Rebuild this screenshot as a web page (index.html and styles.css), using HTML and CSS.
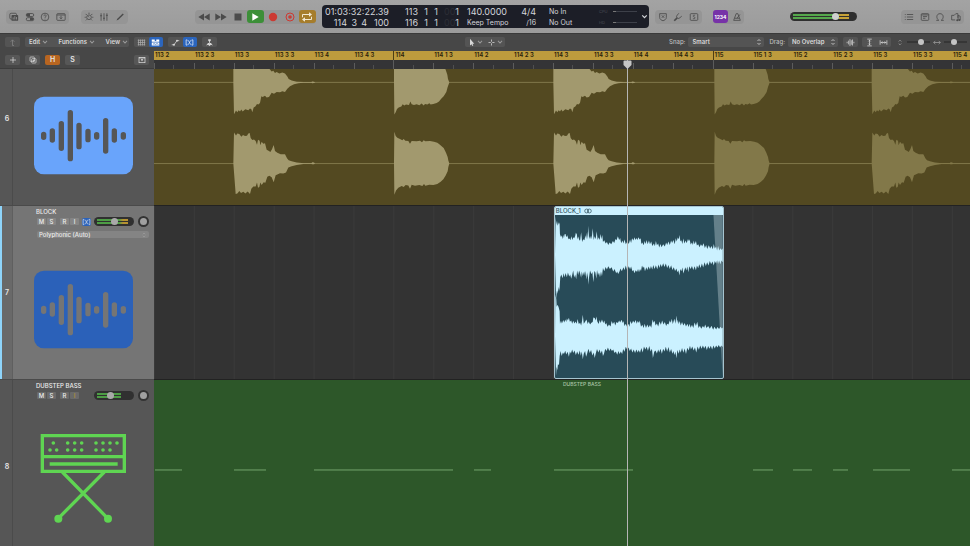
FILE: index.html
```
<!DOCTYPE html>
<html lang="en">
<head>
    <meta charset="UTF-8">
    <meta name="viewport" content="width=device-width, initial-scale=1.0">
    <title>Tracks</title>
    <link rel="stylesheet" href="styles.css">
</head>
<body>
    <!-- shared shapes -->
    <svg class="defs" width="0" height="0" aria-hidden="true">
        <symbol id="chevron" viewBox="0 0 6 6"><path d="M1.5 2.2 3 3.8 4.5 2.2" fill="none" stroke="currentColor" stroke-width=".8"/></symbol>
        <symbol id="updown" viewBox="0 0 6 8"><path d="M1.5 3 3 1.5 4.5 3M1.5 5 3 6.5 4.5 5" fill="none" stroke="currentColor" stroke-width=".8"/></symbol>
        <symbol id="flex" viewBox="0 0 12 10"><path d="M3 1.500H1.500V8.500H3M9 1.500h1.500V8.500H9M3.500 7.500C5 8.500 5 6 6 5S7 1.500 8.500 2.500M3.500 2.500C5 1.500 5 4 6 5S7 8.500 8.500 7.500" fill="none" stroke="currentColor" stroke-width=".9"/></symbol>
        <symbol id="wave-icon" viewBox="101 165 297 294">
            <rect x="101" y="197" width="297" height="233" rx="30" fill="currentColor"/>
            <path class="bars" d="M130 310v9M156 300v27M183 278v74M210 245v138M236 283v64M263 301v25M289 311v7M316 269v91M342 300v27M369 311v7"/>
        </symbol>
        <g id="kick">
            <path d="M250 68V-30H300L320 -5 335 5 350 20 358 27 365 35 370 33 375 40 380 37 388 41 397 38 405 41 412 50 416 58 425 62 440 66 462 67 484 67 487 65 492 66 496 68 492 70 487 71 484 69 460 69 445 71 432 74 420 80 412 87 405 97 397 95 390 98 380 97 372 102 365 99 357 112 350 114 345 108 338 112 334 110 330 130 325 135 321 133 316 141 311 144 307 158 304 149 300 147 295 152 286 149 278 156 274 150 270 156 266 152 262 158 258 153 252 164Z"/>
            <path d="M250 313 252 219 258 228 262 222 268 224 274 232 279 227 285 230 291 229 295 222 299 221 302 236 307 242 312 240 317 245 321 256 324 241 329 244 331 258 335 247 340 253 345 252 350 271 357 275 361 278 366 270 371 257 375 275 382 280 392 285 405 285 411 297 416 303 425 306 440 310 462 312 484 312 487 309 492 310 495 313 492 315 487 315 484 314 460 314 440 317 425 321 415 325 408 340 400 343 390 342 382 346 377 348 371 369 365 354 358 350 352 353 346 371 341 369 335 378 331 370 328 384 324 386 321 370 317 382 310 382 304 389 300 405 293 397 286 403 280 398 273 402 268 396 262 403 257 405Z"/>
        </g>
        <g id="clap">
            <path d="M732 68V-25L742 5 880 15 887 30 892 45 894 58 898 68 893 82 889 97 881 110 873 118 867 126 860 130 850 133 842 135 838 131 832 135 825 133 821 138 815 132 808 137 800 134 792 136 785 134 781 126 777 136 768 135 763 138 758 134 754 141 746 144 741 148 737 158 733 165Z"/>
            <path d="M732 313 733 217 737 230 742 235 750 239 757 243 761 239 766 244 775 245 780 253 785 245 800 246 810 244 816 249 821 243 826 246 840 245 852 247 862 250 868 255 874 260 881 266 888 280 893 293 895 304 898 313 895 323 893 336 887 349 880 360 872 368 862 375 850 378 838 377 826 380 822 375 817 381 808 378 795 380 785 377 780 389 775 379 767 378 761 384 755 381 745 386 738 394 733 407Z"/>
        </g>
    </svg>

    <header class="control-bar">
        <div class="group">
            <button aria-label="Library"><svg viewBox="0 0 12 12"><rect x="1" y="1.500" width="8" height="7" rx="1.500"/><rect class="solid" x="3" y="3.500" width="8" height="7" rx="1"/><path class="cut" d="M5 9V6.500M7 9V5M9 9V6"/></svg></button>
            <button aria-label="Inspector"><svg viewBox="0 0 12 12"><rect x="1.500" y="1.800" width="9" height="3.600" rx="1.800"/><rect x="1.500" y="6.800" width="9" height="3.600" rx="1.800"/><path class="solid" d="M2 2h4v3H2zM6 7h4v3H6z"/></svg></button>
            <button aria-label="Quick Help"><svg viewBox="0 0 12 12"><circle cx="6" cy="6" r="4.600"/><path d="M4.600 5C4.600 3 7.500 3 7.400 4.800 7.300 5.700 6 5.800 6 7M6 8v1"/></svg></button>
            <button aria-label="Toolbar"><svg viewBox="0 0 12 12"><rect x="1" y="2" width="10" height="8" rx="1"/><path d="M1 3.600h10M6 4.500v3.500M4.500 6.600 6 8.200 7.500 6.600"/></svg></button>
        </div>
        <div class="group editors">
            <button aria-label="Smart Controls"><svg viewBox="0 0 12 12"><circle cx="6" cy="6.300" r="2.800"/><path d="M6 6.300 4.800 5M2 2.300l1.300 1.300M10 2.300 8.700 3.600M.8 6.300h1.400M9.800 6.300h1.400M6 .8v1.600M2.300 10l1.200-1.200M9.700 10 8.500 8.800"/></svg></button>
            <button aria-label="Mixer"><svg viewBox="0 0 12 12"><path d="M2.500 1.500v9M6 1.500v9M9.500 1.500v9M1.300 4.500h2.400M4.800 7.500h2.400M8.300 4h2.400"/></svg></button>
            <button aria-label="Editors"><svg viewBox="0 0 12 12"><path class="solid" d="M1.800 10.200 2.800 8 9.300 1.800 10.500 3 4 9.300z"/></svg></button>
        </div>
        <div class="group transport">
            <button aria-label="Rewind"><svg viewBox="0 0 12 12"><path class="solid" d="M6 2.500v7L.3 6zM11.700 2.500v7L6 6z"/></svg></button>
            <button aria-label="Forward"><svg viewBox="0 0 12 12"><path class="solid" d="M.3 2.500v7L6 6zM6 2.500v7L11.700 6z"/></svg></button>
            <button aria-label="Stop"><svg viewBox="0 0 12 12"><path class="solid" d="M2.500 2.500h7v7h-7z"/></svg></button>
            <button class="play" aria-label="Play"><svg viewBox="0 0 12 12"><path class="solid" d="M3.300 2.200v7.600L9.700 6z"/></svg></button>
            <button class="record" aria-label="Record"><svg viewBox="0 0 12 12"><circle class="solid" cx="6" cy="6" r="4.200"/></svg></button>
            <button class="record" aria-label="Capture"><svg viewBox="0 0 12 12"><circle cx="6" cy="6" r="4"/><circle class="solid" cx="6" cy="6" r="1.800"/></svg></button>
            <button class="cycle" aria-label="Cycle"><svg viewBox="0 0 12 12"><path d="M1.500 6.300V3.500h7M10.500 5.700v2.800h-7"/><path class="solid" d="M8 1.300v4.400l3-2.200zM4 6.300v4.400L1 8.500z"/></svg></button>
        </div>
        <div class="lcd">
            <div class="position">
                <div class="time">01:03:32:22.39</div>
                <div class="beats"><span>114</span><span>3</span><span>4</span><span>100</span></div>
            </div>
            <div class="locators">
                <span>113</span><span>1</span><span>1</span><span><i>00</i>1</span>
                <span>116</span><span>1</span><span>1</span><span><i>00</i>1</span>
            </div>
            <div class="tempo"><div>140.0000</div><div class="small">Keep Tempo</div></div>
            <div class="signature"><div>4/4</div><div class="small">/16</div></div>
            <div class="midi small"><div>No In</div><div>No Out</div></div>
            <div class="load"><div>CPU<b></b></div><div>HD<b></b></div></div>
            <button class="lcd-menu" aria-label="Display mode"><svg viewBox="0 0 6 6"><use href="#chevron"/></svg></button>
        </div>
        <div class="group modes">
            <button aria-label="Replace"><svg viewBox="0 0 12 12"><path d="M2 2h8v4.500C10 9 7.500 10 6 10.500 4.500 10 2 9 2 6.500zM4.500 4l3 3M7.500 4l-3 3"/></svg></button>
            <button aria-label="Tuner"><svg viewBox="0 0 12 12"><path class="thick" d="M1.500 10.500 5 7"/><path d="M5 7C3.500 5.500 4 5 7 1.500M5 7C6.500 8.500 7 8 10.500 5"/></svg></button>
            <button aria-label="Solo"><svg viewBox="0 0 12 12"><rect x="1.500" y="2" width="9" height="8" rx="1"/><path d="M7.300 4.200C6 3.500 4.700 4 4.900 5c.2 1 2.200.8 2.300 1.900C7.300 8.200 5.500 8.400 4.600 7.600"/></svg></button>
        </div>
        <div class="group count">
            <button class="count-in">1234</button>
            <button aria-label="Metronome"><svg viewBox="0 0 12 12"><path d="M5 2h2l3 8H2zM3.200 7.500h5.600M6 7.500 9.500 3"/></svg></button>
        </div>
        <input class="master" type="range" min="0" max="100" value="70" aria-label="Master volume">
        <div class="group browsers">
            <button aria-label="List Editors"><svg viewBox="0 0 12 12"><path d="M1 3h1M1 6h1M1 9h1M3.500 3H11M3.500 6H11M3.500 9H11"/></svg></button>
            <button aria-label="Note Pads"><svg viewBox="0 0 12 12"><rect x="1.500" y="2" width="9" height="8" rx="1"/><path d="M1.500 3.500h9M3.500 5.500h5M3.500 7.500h3"/></svg></button>
            <button aria-label="Loop Browser"><svg viewBox="0 0 12 12"><path d="M1.500 10h3C1 7.500 1.500 2 6 2s5 5.500 1.500 8h3"/></svg></button>
            <button aria-label="Media Browser"><svg viewBox="0 0 12 12"><path d="M5 9.500H.8V4h3l2-2h2.500v5M8.500 10V4l2.500 1v5"/><circle class="solid" cx="7.500" cy="10" r="1.200"/><circle class="solid" cx="10" cy="9.500" r="1.200"/></svg></button>
        </div>
    </header>

    <nav class="toolbar">
        <button class="chip dim" aria-label="Up"><svg viewBox="0 0 12 12"><path d="M8 10H6V2.500M3.500 5 6 2.500 8.500 5"/></svg></button>
        <div class="menus">
            <button>Edit<svg viewBox="0 0 6 6"><use href="#chevron"/></svg></button>
            <button>Functions<svg viewBox="0 0 6 6"><use href="#chevron"/></svg></button>
            <button>View<svg viewBox="0 0 6 6"><use href="#chevron"/></svg></button>
        </div>
        <div class="pair">
            <button class="muted" aria-label="Grid"><svg viewBox="0 0 12 12"><path d="M1 3h10M1 6h10M1 9h10M2 2v8M4.700 2v8M7.400 2v8M10 2v8"/></svg></button>
            <button class="on" aria-label="Regions"><svg viewBox="0 0 12 12"><path class="solid" d="M1 2h4v2h2V2h4v3H1zM1 6h10v4H1z"/><path class="blue" d="M2.500 8.500 4 7.500l2 1 2-1 2 1"/></svg></button>
        </div>
        <div class="pair">
            <button aria-label="Automation"><svg viewBox="0 0 12 12"><path d="M1 9h3L8 3.500h3"/><circle class="solid" cx="4" cy="9" r="1.300"/><circle class="solid" cx="8" cy="3.500" r="1.300"/></svg></button>
            <button class="on" aria-label="Flex"><svg viewBox="0 0 12 10"><use href="#flex"/></svg></button>
        </div>
        <button class="chip" aria-label="Catch playhead"><svg viewBox="0 0 12 12"><path class="solid" d="M4.300 1.500h3.400v2L6 5 4.300 3.500zM1.500 10 4 6.500h1.500v1.500h1V6.500H8L10.500 10 8 9 6 10.500 4 9z"/><path d="M6 4v4"/></svg></button>
        <div class="tools">
            <button aria-label="Pointer tool"><svg viewBox="0 0 12 12"><path class="solid" d="M4 1v9l2-1.800 1.200 2.500 1.200-.6L7.300 7.700h2.400z"/></svg><svg class="arrow" viewBox="0 0 6 6"><use href="#chevron"/></svg></button>
            <button aria-label="Marquee tool"><svg viewBox="0 0 12 12"><path d="M6 2v3M6 7v3M2 6h3M7 6h3"/></svg><svg class="arrow" viewBox="0 0 6 6"><use href="#chevron"/></svg></button>
        </div>
        <label for="snap">Snap:</label>
        <div class="picker snap">
            <select id="snap"><option>Smart</option></select>
            <svg viewBox="0 0 6 8"><use href="#updown"/></svg>
        </div>
        <label for="drag">Drag:</label>
        <div class="picker drag">
            <select id="drag"><option>No Overlap</option></select>
            <svg viewBox="0 0 6 8"><use href="#updown"/></svg>
        </div>
        <button class="chip" aria-label="Waveform zoom"><svg viewBox="0 0 12 12"><path d="M1.500 5v2M3.500 3.500v5M5.300 1.500v9M7 3v6M8.700 2v8M10.500 5v2"/></svg></button>
        <div class="pair">
            <button aria-label="Fit height"><svg viewBox="0 0 12 12"><path d="M3 1.500h6M3 10.500h6M6 2.500v7M4.500 4.500 6 3l1.500 1.500M4.500 7.500 6 9l1.500-1.500"/></svg></button>
            <button aria-label="Fit width"><svg viewBox="0 0 12 12"><path d="M1.500 3v6M10.500 3v6M2.500 6h7M4.500 4.500 3 6l1.500 1.500M7.500 4.500 9 6 7.500 7.500"/></svg></button>
        </div>
        <div class="zoom">
            <svg viewBox="0 0 12 12"><path d="M4 4.500 6 2.500l2 2M4 7.500l2 2 2-2"/></svg>
            <input type="range" value="65" aria-label="Vertical zoom">
            <svg viewBox="0 0 12 12"><path d="M1 6h10M3.500 3.500 1 6l2.500 2.500M8.500 3.500 11 6 8.500 8.500"/></svg>
            <input type="range" value="40" aria-label="Horizontal zoom">
        </div>
    </nav>

    <main class="workspace">
        <div class="ruler-row">
            <div class="track-tools">
                <button aria-label="New track"><svg viewBox="0 0 12 12"><path d="M6 1.500v9M1.500 6h9"/></svg></button>
                <button aria-label="Duplicate track"><svg viewBox="0 0 12 12"><rect x="1.500" y="1.500" width="6.500" height="6.500" rx="1"/><rect x="4" y="4" width="6.500" height="6.500" rx="1"/><path d="M7.200 5.500v3.500M5.500 7.200h3.500"/></svg></button>
                <button class="hide">H</button>
                <button>S</button>
                <button class="last" aria-label="Track header settings"><svg viewBox="0 0 12 12"><rect x="1.500" y="2" width="9" height="8"/><path d="M1.500 3h9"/><path class="solid" d="M4 5h4L6 8z"/></svg></button>
            </div>
            <ol class="ruler">
                <li>113 2</li><li>113 2 3</li><li>113 3</li><li>113 3 3</li><li>113 4</li><li>113 4 3</li>
                <li class="bar">114</li><li>114 1 3</li><li>114 2</li><li>114 2 3</li><li>114 3</li><li>114 3 3</li><li>114 4</li><li>114 4 3</li>
                <li class="bar">115</li><li>115 1 3</li><li>115 2</li><li>115 2 3</li><li>115 3</li><li>115 3 3</li><li>115 4</li>
            </ol>
        </div>

        <div class="tracks">
            <section class="track">
                <div class="head">
                    <div class="number">6</div>
                    <div class="info">
                        <div class="strip"></div>
                        <svg class="instrument audio"><use href="#wave-icon"/></svg>
                    </div>
                </div>
                <div class="lane gold">
                    <svg class="content" viewBox="12 -84 2448 522" preserveAspectRatio="none">
                        <path class="zero" d="M12 68H2460M12 313H2460"/>
                        <use class="loud" href="#kick"/>
                        <use class="loud" href="#clap"/>
                        <use class="loud" href="#kick" x="960"/>
                        <use class="soft" href="#clap" x="961"/>
                        <use class="soft" href="#kick" x="1915"/>
                    </svg>
                </div>
            </section>

            <section class="track selected">
                <div class="head">
                    <div class="number">7</div>
                    <div class="info">
                        <div class="strip">
                            <div class="name">BLOCK</div>
                            <div class="controls">
                                <div class="switches"><button>M</button><button>S</button></div>
                                <div class="switches"><button>R</button><button>I</button></div>
                                <button class="flex-on" aria-label="Flex"><svg viewBox="0 0 12 10"><use href="#flex"/></svg></button>
                                <input class="volume" type="range" value="50" aria-label="Volume">
                                <button class="pan" aria-label="Pan"></button>
                            </div>
                            <div class="picker mode">
                                <select aria-label="Flex mode"><option>Polyphonic (Auto)</option></select>
                                <svg viewBox="0 0 6 8"><use href="#updown"/></svg>
                            </div>
                        </div>
                        <svg class="instrument audio"><use href="#wave-icon"/></svg>
                    </div>
                </div>
                <div class="lane empty">
                    <article class="region">
                        <h2>BLOCK_1 <svg viewBox="0 0 9 6"><circle cx="3" cy="3" r="2.200"/><circle cx="6" cy="3" r="2.200"/></svg></h2>
                        <svg class="audio-wave" viewBox="43 46 507 490" preserveAspectRatio="none">
                            <path class="fade" d="M522 46H550V536Z"/>
                            <path class="wave" d="M43 167 45 50 47 75 49 63 51 78 53 73 55 68 57 74 58 104 61 112 64 108 66 119 68 105 70 116 72 104 75 103 77 113 80 107 84 119 87 117 90 122 92 110 96 121 98 113 101 116 104 109 106 99 109 104 111 120 113 111 117 123 119 122 122 98 125 127 128 119 132 122 135 107 137 118 140 96 142 120 144 78 146 118 149 109 152 119 155 107 157 86 160 121 163 110 166 119 169 95 172 121 175 113 178 121 181 103 184 119 186 105 188 127 192 122 196 132 200 127 204 136 208 129 213 134 218 124 222 130 226 118 229 122 233 110 237 121 240 115 243 131 247 123 250 132 253 120 257 134 262 126 266 133 270 120 273 130 276 116 280 123 283 113 286 121 289 115 292 121 295 113 299 120 302 116 304 133 307 129 311 137 314 124 317 133 320 121 323 134 327 123 330 134 334 126 337 139 342 132 345 140 348 124 351 137 355 132 358 144 362 133 365 143 370 134 375 141 379 129 382 136 386 126 390 136 394 123 397 130 401 121 405 134 408 116 411 126 414 114 417 119 419 106 422 125 425 122 428 133 431 117 434 132 438 123 441 131 445 118 448 125 450 119 453 135 457 129 460 136 462 123 465 134 469 124 472 138 476 134 480 143 484 134 488 140 492 131 496 145 500 136 503 148 508 137 512 147 516 139 520 149 523 133 526 147 530 141 533 153 536 139 540 153 543 146 547 151 550 146V188L546 183 543 194 539 183 536 193 533 182 530 192 526 184 523 198 519 186 515 194 511 184 507 198 503 188 499 199 495 188 491 204 487 192 483 205 479 194 476 206 472 198 469 212 465 200 461 211 457 199 453 208 449 200 446 218 443 201 440 213 437 203 434 212 431 222 428 204 425 215 422 208 419 228 416 212 413 218 410 207 406 214 402 203 398 211 394 197 390 208 386 196 382 205 378 192 374 202 370 191 366 202 362 193 359 205 356 195 352 209 348 197 344 208 340 196 337 210 333 199 330 210 326 201 322 211 319 203 315 215 312 201 309 205 306 198 303 214 300 208 297 218 294 208 291 217 287 212 283 221 280 211 277 215 273 201 270 209 266 200 261 212 257 198 253 212 250 203 245 215 241 207 238 216 234 223 231 216 228 221 223 208 219 216 214 203 209 208 204 200 200 210 196 202 192 215 188 205 185 230 182 216 179 233 176 219 173 227 170 211 168 238 165 219 162 214 159 248 156 217 153 224 149 213 146 233 144 256 142 218 139 240 136 214 134 230 131 216 127 229 124 216 122 235 119 222 116 213 113 226 110 213 107 239 104 225 101 234 98 213 95 226 92 238 89 225 86 231 82 219 79 233 75 220 72 233 69 221 66 236 62 225 59 233 57 265 55 275 53 262 51 283 49 273 46 300Z"/>
                            <path class="wave" d="M43 410 44 285 47 300 48 322 51 316 54 323 57 335 58 373 61 364 64 372 68 362 71 369 74 360 77 368 79 357 82 363 85 355 88 367 92 363 95 373 98 364 102 372 105 366 109 373 111 359 115 374 119 370 122 378 125 363 127 346 130 373 134 367 138 360 142 374 145 366 149 375 153 370 157 368 159 354 163 356 166 363 168 351 171 366 175 374 178 362 181 371 185 360 189 371 192 363 195 375 198 371 202 382 206 375 211 381 214 365 218 374 222 367 225 378 229 368 233 371 237 363 240 369 244 361 248 371 250 365 253 380 257 373 261 383 265 373 268 382 271 365 275 374 279 364 283 370 287 362 290 373 293 365 297 371 299 363 303 382 307 376 311 386 314 373 318 386 322 375 326 384 330 377 334 385 338 360 341 370 344 364 347 378 351 372 355 381 359 366 363 376 367 363 371 375 375 368 379 380 382 373 386 375 390 363 393 370 396 358 399 374 402 364 404 358 407 373 410 348 412 370 414 361 417 374 420 365 423 378 427 368 431 378 435 371 439 381 443 373 447 383 450 373 453 385 457 376 461 386 465 369 469 380 473 367 477 386 481 379 485 388 490 380 494 385 497 375 501 386 506 380 511 388 516 379 521 391 525 382 530 390 534 383 539 389 543 382 547 387 550 384V443L546 438 542 444 538 437 534 444 530 438 526 447 522 438 518 450 514 439 510 448 506 440 502 452 498 439 494 447 490 438 486 448 482 438 478 451 474 441 470 459 466 444 462 453 458 441 454 450 451 439 447 453 443 445 439 464 435 447 431 460 427 446 423 460 420 450 417 463 413 452 410 477 407 457 404 467 401 455 398 463 394 449 390 459 386 443 382 456 378 442 374 456 370 448 366 463 362 448 358 459 355 450 351 462 347 453 343 457 339 476 336 448 332 456 328 440 324 454 320 442 316 450 312 441 308 459 304 446 300 460 296 452 293 459 289 450 285 461 281 450 277 459 273 447 269 455 265 444 261 450 257 442 253 457 249 449 246 464 242 456 238 464 235 455 231 466 227 456 223 461 219 450 215 455 211 447 207 455 203 444 199 455 195 448 191 463 188 470 185 453 181 462 178 450 174 459 170 449 166 463 163 476 160 459 156 468 152 452 148 461 144 448 140 463 137 472 134 455 130 463 127 480 124 456 121 469 118 453 114 466 110 456 106 467 102 453 98 461 95 450 91 462 88 456 85 472 81 457 77 465 74 454 70 464 67 459 63 470 60 455 57 470 55 498 52 494 50 513 48 502 46 530Z"/>
                        </svg>
                    </article>
                </div>
            </section>

            <section class="track">
                <div class="head">
                    <div class="number">8</div>
                    <div class="info">
                        <div class="strip">
                            <div class="name">DUBSTEP BASS</div>
                            <div class="controls">
                                <div class="switches"><button>M</button><button>S</button></div>
                                <div class="switches"><button>R</button><button class="input">I</button></div>
                                <input class="volume quiet" type="range" value="40" aria-label="Volume">
                                <button class="pan" aria-label="Pan"></button>
                            </div>
                        </div>
                        <svg class="instrument synth" viewBox="101 177 297 294">
                            <path class="frame" d="M126 182H372V289H126ZM126 245H372M148 267H352" />
                            <path class="legs" d="M186 291 322 430M312 291 174 430"/>
                            <circle cx="174" cy="431" r="12"/><circle cx="323" cy="431" r="12"/>
                            <path class="dots" d="M159 204h0M202 204h0M223 204h0M244 204h0M287 204h0M308 204h0M329 204h0M350 204h0M149 225h0M169 225h0M202 225h0M223 225h0M244 225h0M287 225h0M308 225h0M329 225h0"/>
                        </svg>
                    </div>
                </div>
                <div class="lane green">
                    <svg class="content" viewBox="0 0 816 174" preserveAspectRatio="none">
                        <path class="notes" d="M1 90.500H28M80 90.500H112M160 90.500H299M320 90.500H337M400 90.500H479M599 90.500H619M639 90.500H658M679 90.500H694M719 90.500H756M798 90.500H816"/>
                    </svg>
                    <h2 class="region-name">DUBSTEP BASS</h2>
                </div>
            </section>
        </div>

        <div class="playhead"><svg viewBox="0 0 9 9"><path d="M.5 1.500Q.5.500 1.500.500h6q1 0 1 1V5L4.500 9 .5 5z"/></svg></div>
    </main>
</body>
</html>
```

FILE: styles.css
```
* {
    box-sizing: border-box;
}

body {
    margin: 0;
    height: 100vh;
    display: flex;
    flex-direction: column;
    overflow: hidden;
    background: #343434;
    color: #e4e4e4;
    font-family: Inter, "Liberation Sans", sans-serif;
    font-size: 6px;
    line-height: 8px;
}

button,
select,
input {
    margin: 0;
    padding: 0;
    border: 0;
    background: none;
    color: inherit;
    font: inherit;
    appearance: none;
}

button {
    display: flex;
    align-items: center;
    justify-content: center;
}

svg {
    display: block;
    fill: none;
    stroke: currentColor;
}

.defs {
    position: absolute;
}

.solid {
    fill: currentColor;
    stroke: none;
}

.thick {
    stroke-width: 2;
}

/* control bar */
.control-bar {
    display: flex;
    align-items: center;
    height: 33px;
    flex: none;
    padding: 0 6px;
    background: linear-gradient(#a3a3a3, #9b9b9b);
    color: #4b4b4b;
}

.group {
    display: flex;
    align-items: center;
    justify-content: space-around;
    width: 63px;
    height: 14px;
    border-radius: 4px;
    background: #959595;
}

.group svg {
    width: 10px;
    height: 10px;
}

.group .cut {
    stroke: #959595;
}

.editors {
    width: 47px;
    margin-left: 12px;
}

.transport {
    justify-content: space-between;
    width: 121px;
    margin-left: 67px;
}

.transport button {
    width: 17px;
    height: 13px;
    border-radius: 3px;
}

.transport svg {
    width: 12px;
    height: 12px;
}

.transport .play {
    background: #3c8f38;
    color: #fff;
}

.transport .record {
    color: #cb3a33;
}

.transport .cycle {
    background: #a67d2b;
    color: #f2e9d2;
}

.lcd {
    display: flex;
    align-items: center;
    width: 327px;
    height: 23px;
    margin-left: 6px;
    padding-left: 3px;
    border-radius: 4px;
    background: #1c1e27;
    color: #d3d5da;
    font-size: 9px;
    line-height: 11px;
}

.position {
    width: 72px;
}

.beats {
    display: grid;
    grid-template-columns: 22px 10px 10px 22px;
    text-align: right;
}

.locators {
    display: grid;
    grid-template-columns: 21px 10px 10px 21px;
    width: 70px;
    text-align: right;
}

.locators i {
    color: #2c2e36;
    font-style: normal;
}

.tempo {
    width: 46px;
}

.lcd .small {
    font-size: 7px;
}

.signature {
    width: 23px;
    text-align: right;
}

.midi {
    width: 50px;
    margin-left: 13px;
}

.load {
    width: 38px;
    color: #484b54;
    font-size: 4px;
}

.load div {
    display: flex;
    align-items: center;
    justify-content: space-between;
}

.load b {
    width: 24px;
    height: 1px;
    background: linear-gradient(90deg, #777 3px, #3d4049 3px);
}

.lcd-menu {
    margin-left: auto;
}

.lcd-menu svg {
    width: 9px;
    height: 9px;
}

.modes {
    width: 47px;
    margin-left: 6px;
}

.count {
    width: 31px;
    margin-left: 11px;
    justify-content: space-between;
    padding-right: 2px;
}

.count-in {
    width: 15px;
    height: 13px;
    border-radius: 3px;
    background: #7732a8;
    color: #fff;
    font-size: 5px;
    font-weight: 700;
}

/* level meters double as faders */
.master {
    width: 67px;
    height: 9px;
    margin-left: 46px;
    border-radius: 5px;
    background:
        linear-gradient(#2f2f2f, #2f2f2f) 3px 4px / 56px 1px no-repeat,
        linear-gradient(90deg, #55a84c 46px, #c5a137 46px) 3px 2px / 56px 5px no-repeat,
        #2f2f2f;
}

.master::-webkit-slider-thumb,
.volume::-webkit-slider-thumb {
    appearance: none;
    width: 7px;
    height: 7px;
    border-radius: 50%;
    background: #cfcfcf;
}

.browsers {
    width: 63px;
    margin-left: auto;
}

/* tracks toolbar */
.toolbar {
    display: flex;
    align-items: center;
    flex: none;
    height: 18px;
    padding: 0 3px 1px 5px;
    border-top: 1px solid #3a3a3a;
    background: #474747;
    color: #d8d8d8;
    font-weight: 600;
}

.toolbar svg {
    width: 9px;
    height: 9px;
}

.chip,
.menus,
.pair,
.tools,
.picker {
    height: 10px;
    border-radius: 2px;
    background: #545454;
}

.chip {
    width: 15px;
}

.dim {
    color: #858585;
}

.muted {
    color: #aaa;
}

.menus {
    display: flex;
    justify-content: space-between;
    width: 104px;
    margin-left: 5px;
    margin-right: 5px;
    padding-left: 4px;
}

.menus button {
    gap: 1px;
}

.menus svg,
.tools .arrow {
    width: 8px;
    height: 8px;
    color: #999;
}

.pair {
    display: flex;
    width: 29px;
    margin-right: 5px;
}

.pair button {
    flex: 1;
    border-radius: 2px;
}

.pair .on {
    background: #2b65bd;
    color: #fff;
}

.blue {
    stroke: #2b65bd;
}

.tools {
    display: flex;
    justify-content: space-around;
    width: 40px;
    margin-left: 248px;
    margin-right: auto;
}

.toolbar label {
    color: #bdbdbd;
    font-weight: 500;
}

.picker {
    display: flex;
    align-items: center;
    margin: 0 5px 0 3px;
}

.picker select {
    flex: 1;
    min-width: 0;
    padding-left: 4px;
}

.picker svg {
    width: 6px;
    height: 8px;
    margin-right: 2px;
    pointer-events: none;
}

.snap {
    width: 76px;
}

.drag {
    width: 50px;
}

.drag + .chip {
    margin-right: 4px;
}

.zoom {
    display: flex;
    align-items: center;
    gap: 3px;
    width: 71px;
}

.zoom svg {
    width: 8px;
    flex: none;
    color: #aaa;
}

.zoom input {
    flex: 1;
    min-width: 0;
    height: 6px;
    background: linear-gradient(#363636, #363636) center / 100% 2px no-repeat;
}

.zoom input::-webkit-slider-thumb {
    appearance: none;
    width: 6px;
    height: 6px;
    border-radius: 50%;
    background: #c4c4c4;
}

/* ruler */
.workspace {
    position: relative;
    flex: 1;
    min-height: 0;
    display: flex;
    flex-direction: column;
    overflow: hidden;
}

.ruler-row {
    display: flex;
    flex: none;
    height: 18px;
}

.track-tools {
    display: flex;
    align-items: center;
    gap: 5px;
    width: 154px;
    padding: 0 5px;
    border-bottom: 1px solid #3c3c3c;
    background: #474747;
}

.track-tools button {
    width: 15px;
    height: 10px;
    border-radius: 2px;
    background: #575757;
    font-size: 7px;
    font-weight: 600;
}

.track-tools svg {
    width: 8px;
    height: 8px;
}

.track-tools .hide {
    background: #b86520;
}

.track-tools .last {
    margin-left: auto;
}

.ruler {
    flex: 1;
    display: grid;
    grid-template-columns: repeat(20, 1fr) 18px;
    margin: 0;
    padding: 0;
    overflow: hidden;
    background: linear-gradient(#bd9b3d 9px, #343436 9px);
    color: #29210a;
    font-weight: 600;
    list-style: none;
}

.ruler li {
    min-width: 0;
    padding-left: 1px;
    overflow: hidden;
    white-space: nowrap;
    background:
        linear-gradient(#5c5c5c, #5c5c5c) 0 100% / 1px 6px no-repeat,
        linear-gradient(#505050, #505050) 50% 100% / 1px 4px no-repeat;
}

.ruler .bar {
    padding-left: 2px;
    background:
        linear-gradient(#4d3e14, #4d3e14) 0 0 / 1px 9px no-repeat,
        linear-gradient(#5c5c5c, #5c5c5c) 0 100% / 1px 9px no-repeat,
        linear-gradient(#505050, #505050) 50% 100% / 1px 4px no-repeat;
}

/* the list is scrolled a little way into the first track */
.tracks {
    display: flex;
    flex: 1;
    flex-direction: column;
    justify-content: flex-start;
    min-height: 0;
    overflow: hidden;
}

.tracks .track:first-child {
    margin-top: -37px;
}

.track {
    --head: #565656;
    display: flex;
    flex: none;
    height: 174px;
}

.selected {
    --head: #757575;
}

.head {
    display: flex;
    width: 154px;
    flex: none;
    border-bottom: 1px solid #4a4a4a;
    background: var(--head);
}

.number {
    display: flex;
    align-items: center;
    justify-content: center;
    width: 13px;
    padding-left: 2px;
    border-right: 1px solid #4b4b4b;
    color: #e6e6e6;
    font-size: 7px;
    font-weight: 600;
}

.selected .number {
    padding-left: 0;
    border-left: 2px solid #8ed4fa;
    border-right-color: #5f5f5f;
    background: #696969;
}

.info {
    flex: 1;
    display: grid;
    grid-template-rows: 54px 98px;
    justify-items: center;
}

.strip {
    width: 100%;
    padding: 2px 5px 0 23px;
    color: #ececec;
    font-weight: 500;
}

.controls {
    display: flex;
    align-items: center;
    height: 11px;
}

.switches {
    display: flex;
    gap: 1px;
    margin-left: 1px;
    margin-right: 3px;
}

.switches button {
    width: 9px;
    height: 7px;
    border-radius: 1px;
    background: rgba(255, 255, 255, 0.12);
}

.switches .input {
    color: #b99232;
}

.flex-on {
    width: 9px;
    height: 8px;
    border-radius: 2px;
    background: #2a62bb;
}

.flex-on svg {
    width: 9px;
    height: 8px;
}

.volume {
    width: 40px;
    height: 9px;
    margin-left: auto;
    margin-right: 4px;
    border-radius: 5px;
    background:
        linear-gradient(#303030, #303030) 3px 4px / 31px 1px no-repeat,
        linear-gradient(90deg, #4d9d45 22px, #b69232 26px) 3px 2px / 31px 5px no-repeat,
        #303030;
}

.volume.quiet {
    background:
        linear-gradient(#303030, #303030) 3px 4px / 24px 1px no-repeat,
        linear-gradient(#4d9d45, #4d9d45) 3px 2px / 24px 5px no-repeat,
        #303030;
}

.volume::-webkit-slider-thumb {
    background: #a9a9a9;
}

.pan {
    width: 11px;
    height: 11px;
    border: 2px solid #333;
    border-radius: 50%;
    background: #a0a0a0;
}

.mode {
    height: 7px;
    margin: 4px 0 0 1px;
    background: #848484;
}

.mode select {
    padding-left: 2px;
    line-height: 7px;
}

.mode svg {
    height: 6px;
    color: #aaa;
}

.instrument {
    width: 99px;
    height: 98px;
    stroke: none;
}

.audio {
    color: #69a4fb;
}

.selected .audio {
    color: #2b61b9;
}

.bars {
    fill: none;
    stroke: var(--head);
    stroke-width: 16;
    stroke-linecap: round;
}

.synth {
    fill: #5fd552;
    color: #5fd552;
}

.synth path {
    fill: none;
    stroke: currentColor;
    stroke-width: 10;
}

.synth .dots {
    stroke-width: 11;
    stroke-linecap: round;
}

/* lanes */
.lane {
    position: relative;
    flex: 1;
    border-bottom: 1px solid #222;
}

.content {
    width: 100%;
    height: 100%;
    stroke: none;
}

.gold {
    background: #534921;
}

.zero {
    stroke: #81774a;
    stroke-width: 3;
}

.loud {
    fill: #a2996e;
}

.soft {
    fill: #827849;
}

.empty {
    background: linear-gradient(90deg, #3a3a3a 1px, #333 1px) 0 0 / calc((100% - 18px) / 20) 100%;
}

.green {
    background: #2d5729;
}

.notes {
    stroke: #73a46d;
    stroke-width: 1;
}

.region {
    position: absolute;
    top: 0;
    bottom: 0;
    left: 49%;
    width: 20.8%;
    display: flex;
    flex-direction: column;
    overflow: hidden;
    border: 1px solid #a6c4cf;
    border-radius: 2px;
    background: #284b58;
}

.region h2 {
    display: flex;
    align-items: center;
    gap: 3px;
    flex: none;
    height: 8px;
    margin: 0;
    padding-left: 1px;
    background: #cbf1ff;
    color: #31525e;
    font-size: 6px;
    font-weight: 500;
}

.region h2 svg {
    width: 8px;
    height: 6px;
    stroke-width: 0.8;
}

.audio-wave {
    width: 100%;
    flex: 1;
    min-height: 0;
    stroke: none;
}

.wave {
    fill: #cbf1ff;
}

.fade {
    fill: #64808a;
}

.region-name {
    position: absolute;
    top: 0;
    left: 50%;
    margin: 0;
    padding-left: 1px;
    color: #a9c4a6;
    font-size: 5px;
    font-weight: 500;
}

.playhead {
    position: absolute;
    top: 9px;
    bottom: 0;
    left: calc(154px + (100% - 154px) * 0.58);
    width: 1px;
    background: #b5b5b5;
}

.playhead svg {
    width: 9px;
    height: 9px;
    margin-left: -4px;
    fill: #c6c6c6;
    stroke: none;
}
```
